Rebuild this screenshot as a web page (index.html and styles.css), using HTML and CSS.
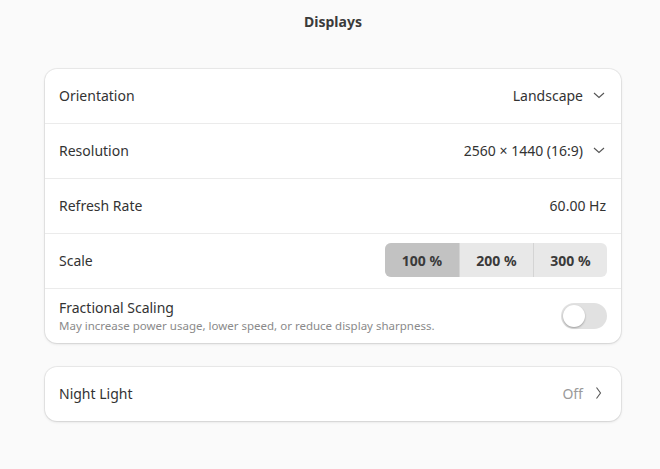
FILE: index.html
```html
<!DOCTYPE html>
<html lang="en">
<head>
    <meta charset="UTF-8">
    <title>Displays</title>
    <link rel="stylesheet" href="styles.css">
</head>
<body>
    <div class="page">
        <h1 class="title">Displays</h1>

        <div class="card">
            <div class="row">
                <div class="label">Orientation</div>
                <div class="value">Landscape
                    <svg class="chevron" width="16" height="16" viewBox="0 0 16 16"><path d="M3 6l5 4.5 5-4.5" fill="none" stroke="#555" stroke-width="1.1"/></svg>
                </div>
            </div>
            <div class="row">
                <div class="label">Resolution</div>
                <div class="value">2560 × 1440 (16:9)
                    <svg class="chevron" width="16" height="16" viewBox="0 0 16 16"><path d="M3 6l5 4.5 5-4.5" fill="none" stroke="#555" stroke-width="1.1"/></svg>
                </div>
            </div>
            <div class="row">
                <div class="label">Refresh Rate</div>
                <div class="value plain">60.00 Hz</div>
            </div>
            <div class="row">
                <div class="label">Scale</div>
                <div class="segmented">
                    <div class="segment active">100 %</div>
                    <div class="segment">200 %</div>
                    <div class="segment">300 %</div>
                </div>
            </div>
            <div class="row">
                <div class="label-group">
                    <div class="label">Fractional Scaling</div>
                    <div class="sublabel">May increase power usage, lower speed, or reduce display sharpness.</div>
                </div>
                <div class="switch"><div class="knob"></div></div>
            </div>
        </div>

        <div class="card">
            <div class="row">
                <div class="label">Night Light</div>
                <div class="value dim">Off
                    <svg class="chevron" width="16" height="16" viewBox="0 0 16 16"><path d="M5.5 2.5l4 5.5-4 5.5" fill="none" stroke="#555" stroke-width="1.1"/></svg>
                </div>
            </div>
        </div>
    </div>
</body>
</html>
```

FILE: styles.css
```css
* {
    margin: 0;
    padding: 0;
    box-sizing: border-box;
}

body {
    font-family: 'Noto Sans', 'Open Sans', sans-serif;
    background: #fafafa;
    color: #333;
    font-size: 14px;
}

.page {
    width: 576px;
    margin-left: 45px;
    padding-top: 12px;
}

.title {
    text-align: center;
    font-size: 14px;
    font-weight: 700;
    color: #3a3a3a;
    height: 20px;
    line-height: 20px;
    margin-bottom: 37px;
}

.card {
    background: #fff;
    border-radius: 12px;
    box-shadow: 0 0 0 1px rgba(0, 0, 0, 0.06), 0 1px 3px rgba(0, 0, 0, 0.12);
    margin-bottom: 24px;
}

.row {
    display: flex;
    align-items: center;
    justify-content: space-between;
    height: 55px;
    padding: 0 14px 2px;
    border-bottom: 1px solid #ebebeb;
}

.row:last-child {
    border-bottom: none;
    height: 54px;
}

.label {
    font-size: 14px;
    color: #333;
}

.value {
    display: flex;
    align-items: center;
    font-size: 14px;
    color: #333;
}

.value.plain {
    padding-right: 1px;
}

.value.dim {
    color: #9a9a9a;
}

.chevron {
    margin-left: 8px;
    margin-right: 0;
}

.segmented {
    display: flex;
    height: 34px;
    border-radius: 6px;
    overflow: hidden;
    background: #e8e8e8;
}

.segment {
    width: 74px;
    display: flex;
    align-items: center;
    justify-content: center;
    font-size: 14px;
    font-weight: 700;
    color: #3a3a3a;
    border-left: 1px solid #d4d4d4;
}

.segment:first-child {
    border-left: none;
}

.segment.active {
    background: #c2c2c2;
}

.label-group {
    display: flex;
    flex-direction: column;
}

.sublabel {
    font-size: 11.5px;
    color: #8a8a8a;
    margin-top: 1px;
}

.switch {
    width: 46px;
    height: 26px;
    border-radius: 13px;
    background: #e1e1e1;
    padding: 2px;
    margin-top: 2px;
}

.knob {
    width: 22px;
    height: 22px;
    border-radius: 50%;
    background: #fff;
    box-shadow: 0 1px 2px rgba(0, 0, 0, 0.3);
}
```
